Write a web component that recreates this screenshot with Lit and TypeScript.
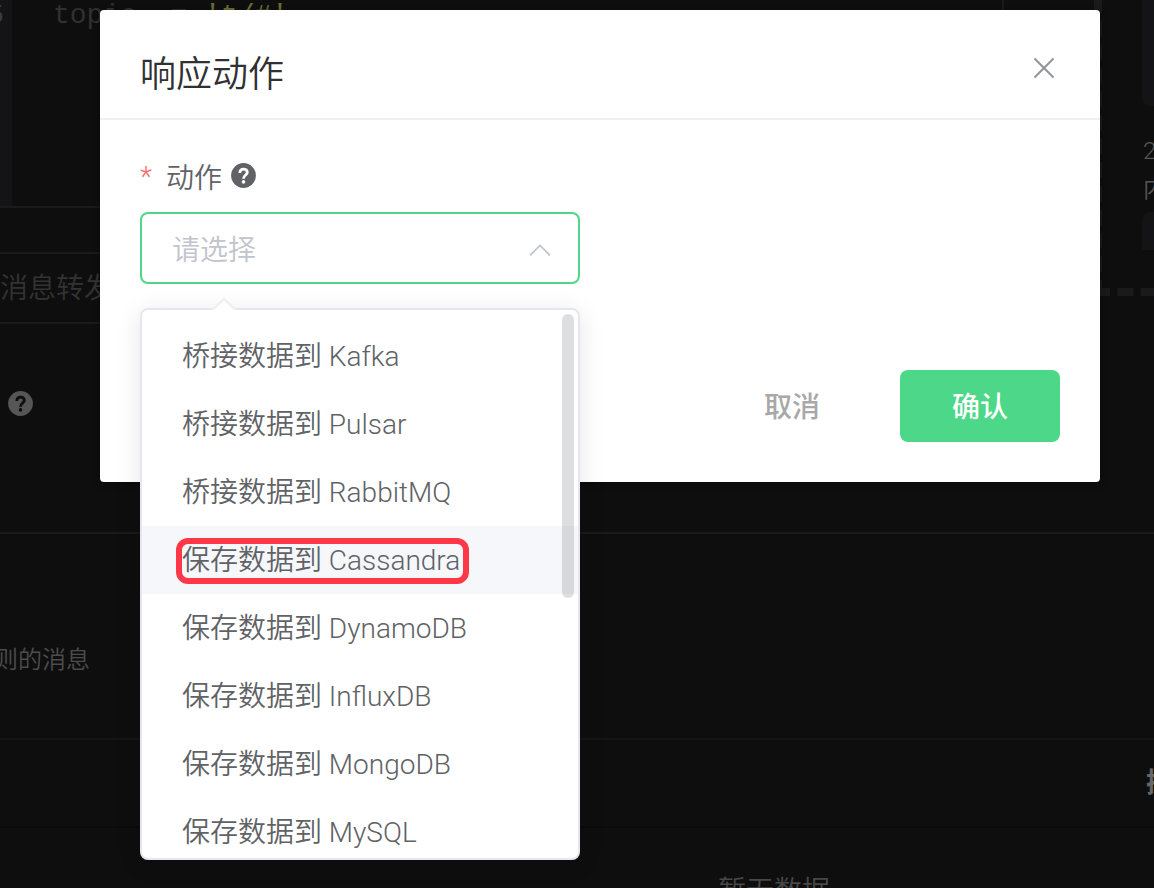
import { LitElement, html, css, svg } from "lit";
import { customElement, property, state } from "lit/decorators.js";
import { classMap } from "lit/directives/class-map.js";

@customElement("help-icon")
class HelpIcon extends LitElement {
  static styles = css`
    :host {
      display: inline-flex;
    }
    .icon {
      width: 26px;
      height: 26px;
      display: block;
    }
    .disc {
      fill: currentColor;
    }
    .hook {
      fill: none;
      stroke: var(--mark, #fff);
      stroke-width: 2.8;
    }
    .dot {
      fill: var(--mark, #fff);
    }
  `;

  render() {
    return html`<svg class="icon" viewBox="0 0 26 26" aria-hidden="true">
      ${svg`<circle class="disc" cx="12.5" cy="12.5" r="12.4"/>
      <path class="hook" d="M8.8 9.9C8.8 7.4 10.4 6.2 12.5 6.2C14.7 6.2 16.3 7.5 16.3 9.5C16.3 12.1 12.5 12.1 12.5 15.8"/>
      <circle class="dot" cx="12.5" cy="18.9" r="1.8"/>`}
    </svg>`;
  }
}

@customElement("rule-page")
class RulePage extends LitElement {
  static styles = css`
    :host {
      display: block;
      height: 100%;
      overflow: hidden;
      background: #0e0e0e;
      color: #565656;
      font-family: Roboto, "Noto Sans CJK SC", sans-serif;
      font-weight: 350;
      font-size: 28px;
    }
    .top {
      display: grid;
      grid-template-columns: minmax(0, 1fr) 60px;
      height: 532px;
      border-bottom: 2px solid #1a1a1a;
    }
    .left {
      display: flex;
      flex-direction: column;
    }
    .editor {
      display: flex;
      height: 206px;
      margin-right: 90px;
      border-right: 2px solid #1a1a1a;
      border-bottom: 2px solid #1a1a1a;
      font-family: "Liberation Mono", monospace;
      font-weight: 400;
      line-height: 32px;
      white-space: pre;
    }
    .gutter {
      display: flex;
      justify-content: flex-end;
      box-sizing: border-box;
      width: 12px;
      padding-right: 8px;
      background: #141417;
      color: #2e4040;
      overflow: hidden;
    }
    .code {
      margin: 0;
      padding-left: 41px;
      font: inherit;
      color: #303030;
    }
    .string {
      color: #6b6b34;
    }
    .field {
      box-sizing: border-box;
      margin: 44px 90px 0 0;
      height: 72px;
      line-height: 70px;
      border: solid #1a1a1a;
      border-width: 2px 0;
      color: #333;
    }
    .help {
      margin: 67px 0 0 8px;
      --mark: #0e0e0e;
    }
    .side {
      display: flex;
      align-items: flex-end;
      height: 296px;
      overflow: hidden;
    }
    .frame {
      flex: none;
      display: flex;
      flex-direction: column;
      justify-content: flex-end;
      box-sizing: border-box;
      width: 320px;
      height: 464px;
      padding: 0 40px 38px;
      border: 8px dashed #1a1a1c;
      font-size: 24px;
      line-height: 38px;
    }
    .card {
      height: 120px;
      border-radius: 8px;
      background: #141416;
    }
    .card-short {
      height: 38px;
      border-radius: 8px 8px 0 0;
    }
    .steps {
      margin: 26px 0 4px;
      padding-left: 1px;
    }
    .note {
      display: flex;
      justify-content: flex-end;
      width: 90px;
      height: 204px;
      line-height: 252px;
      font-size: 24px;
      color: #4c4c4c;
      white-space: nowrap;
    }
    .table {
      width: 1548px;
      border-collapse: collapse;
      border-top: 2px solid #151515;
    }
    .head {
      height: 82px;
      padding: 0 0 4px;
      text-align: left;
      font-weight: 700;
      color: #666;
      border-bottom: 2px solid #0b0b0b;
    }
    .wide {
      width: 1146px;
    }
    .empty {
      height: 114px;
      padding: 4px 0 0;
      text-align: center;
      color: #484848;
    }
  `;

  render() {
    return html`
      <div class="top">
        <div class="left">
          <div class="editor">
            <span class="gutter">5</span>
            <pre class="code">topic  = <span class="string">'t/#'</span></pre>
          </div>
          <div class="field">消息转发</div>
          <help-icon class="help"></help-icon>
        </div>
        <div class="side">
          <div class="frame">
            <div class="card"></div>
            <div class="steps">2<br />内</div>
            <div class="card card-short"></div>
          </div>
        </div>
      </div>
      <div class="note">规则的消息</div>
      <table class="table">
        <thead>
          <tr>
            <th class="head wide"></th>
            <th class="head">操作</th>
          </tr>
        </thead>
        <tbody>
          <tr>
            <td class="empty" colspan="2">暂无数据</td>
          </tr>
        </tbody>
      </table>
    `;
  }
}

interface ActionOption {
  label: string;
  marked?: boolean;
}

@customElement("action-select")
class ActionSelect extends LitElement {
  @property({ attribute: false }) options: ActionOption[] = [];
  @state() private open = true;
  @state() private active = 3;
  @state() private chosen = "";

  static styles = css`
    :host {
      display: block;
      position: relative;
    }
    .label {
      display: flex;
      align-items: center;
      height: 40px;
      margin-bottom: 16px;
      color: #606266;
    }
    .star {
      width: 26px;
      color: #f56c6c;
    }
    .help {
      margin-left: 9px;
    }
    .box {
      position: relative;
    }
    .select {
      appearance: none;
      display: block;
      box-sizing: border-box;
      width: 100%;
      height: 72px;
      padding: 4px 80px 0 30px;
      border: 2px solid #4cd888;
      border-radius: 8px;
      outline: none;
      background: #fff;
      color: #c0c4cc;
      font: inherit;
    }
    .chevron {
      position: absolute;
      right: 28px;
      top: 26px;
      width: 24px;
      height: 24px;
      fill: none;
      stroke: #c0c4cc;
      stroke-width: 1.8;
      pointer-events: none;
    }
    .menu {
      position: absolute;
      z-index: 1;
      left: 0;
      right: 0;
      top: calc(100% + 24px);
      border: 2px solid #e4e7ed;
      border-radius: 8px;
      background: #fff;
      box-shadow: 0 4px 24px rgba(0, 0, 0, 0.1);
    }
    .arrow {
      position: absolute;
      left: 70px;
      top: -12px;
      width: 24px;
      height: 12px;
    }
    .arrow-fill {
      fill: #fff;
    }
    .arrow-line {
      fill: none;
      stroke: #ebeef5;
      stroke-width: 2;
    }
    .list {
      max-height: 548px;
      box-sizing: border-box;
      padding-top: 12px;
      border-radius: 6px;
      overflow: hidden;
    }
    .option {
      display: block;
      width: 100%;
      height: 68px;
      padding: 2px 0 0 40px;
      border: 0;
      background: none;
      color: #606266;
      font: inherit;
      line-height: 66px;
      text-align: left;
      white-space: nowrap;
    }
    .active {
      background: #f5f7fa;
    }
    .text {
      position: relative;
      display: inline-block;
    }
    .marked::after {
      content: "";
      position: absolute;
      inset: 10px -9px 10px -6px;
      border: 6px solid #ff3847;
      border-radius: 12px;
    }
    .thumb {
      position: absolute;
      right: 4px;
      top: 4px;
      width: 12px;
      height: 284px;
      border-radius: 6px;
      background: rgba(144, 147, 153, 0.3);
    }
  `;

  private pick(label: string) {
    this.chosen = label;
    this.open = false;
  }

  private toggle(event: Event) {
    event.preventDefault();
    this.open = !this.open;
  }

  render() {
    return html`
      <label class="label" for="action">
        <span class="star">*</span>动作<help-icon class="help"></help-icon>
      </label>
      <div class="box">
        <select class="select" id="action" @mousedown=${this.toggle}>
          <option>${this.chosen || "请选择"}</option>
        </select>
        <svg class="chevron" viewBox="0 0 24 24" aria-hidden="true">
          <path d="M2 17.4L12 7.4L22 17.4" />
        </svg>
      </div>
      ${this.open
        ? html`<div class="menu">
            <svg class="arrow" viewBox="0 0 24 12" aria-hidden="true">
              <path class="arrow-fill" d="M0 12L12 0L24 12Z" />
              <path class="arrow-line" d="M1 11.5L12 1L23 11.5" />
            </svg>
            <div class="list" role="listbox">
              ${this.options.map(
                (option, index) => html`<button
                  type="button"
                  role="option"
                  class=${classMap({ option: true, active: index === this.active })}
                  @mouseenter=${() => (this.active = index)}
                  @click=${() => this.pick(option.label)}
                >
                  <span class=${classMap({ text: true, marked: !!option.marked })}>${option.label}</span>
                </button>`
              )}
            </div>
            <div class="thumb"></div>
          </div>`
        : null}
    `;
  }
}

@customElement("app-root")
class AppRoot extends LitElement {
  private options: ActionOption[] = [
    { label: "桥接数据到 Kafka" },
    { label: "桥接数据到 Pulsar" },
    { label: "桥接数据到 RabbitMQ" },
    { label: "保存数据到 Cassandra", marked: true },
    { label: "保存数据到 DynamoDB" },
    { label: "保存数据到 InfluxDB" },
    { label: "保存数据到 MongoDB" },
    { label: "保存数据到 MySQL" },
  ];

  static styles = css`
    :host {
      display: block;
      position: relative;
      height: 100vh;
      overflow: hidden;
      font-family: Roboto, "Noto Sans CJK SC", sans-serif;
      font-weight: 350;
      font-size: 28px;
    }
    .overlay {
      position: absolute;
      inset: 0;
      padding: 10px 54px 0 100px;
    }
    .dialog {
      border-radius: 4px;
      background: #fff;
      box-shadow: 0 2px 6px rgba(0, 0, 0, 0.3);
    }
    .header {
      display: flex;
      align-items: center;
      justify-content: space-between;
      height: 108px;
      padding: 0 40px;
      border-bottom: 2px solid #f0f0f0;
    }
    .title {
      margin: 22px 0 0;
      font-size: 36px;
      line-height: 44px;
      font-weight: 350;
      color: #303133;
    }
    .close {
      display: flex;
      padding: 0;
      margin: 8px 4px 0 0;
      border: 0;
      background: none;
    }
    .cross {
      width: 24px;
      height: 24px;
      stroke: #909399;
      stroke-width: 2;
    }
    .body {
      display: grid;
      grid-template-columns: 1fr 1fr;
      gap: 40px;
      padding: 36px 40px 0;
    }
    .footer {
      display: flex;
      justify-content: flex-end;
      gap: 28px;
      padding: 86px 40px 40px;
    }
    .button {
      width: 160px;
      height: 72px;
      padding: 0 0 2px;
      border: 0;
      border-radius: 8px;
      background: none;
      font: inherit;
      font-weight: 500;
      color: #a8a8a8;
    }
    .primary {
      background: #4cd888;
      color: #fff;
    }
  `;

  render() {
    return html`
      <rule-page></rule-page>
      <div class="overlay">
        <section class="dialog" role="dialog" aria-labelledby="title">
          <header class="header">
            <h2 class="title" id="title">响应动作</h2>
            <button class="close" type="button" aria-label="关闭">
              <svg class="cross" viewBox="0 0 24 24" aria-hidden="true">
                <path d="M2.5 2.5L21.5 21.5M21.5 2.5L2.5 21.5" />
              </svg>
            </button>
          </header>
          <div class="body">
            <action-select .options=${this.options}></action-select>
          </div>
          <footer class="footer">
            <button class="button" type="button">取消</button>
            <button class="button primary" type="button">确认</button>
          </footer>
        </section>
      </div>
    `;
  }
}
